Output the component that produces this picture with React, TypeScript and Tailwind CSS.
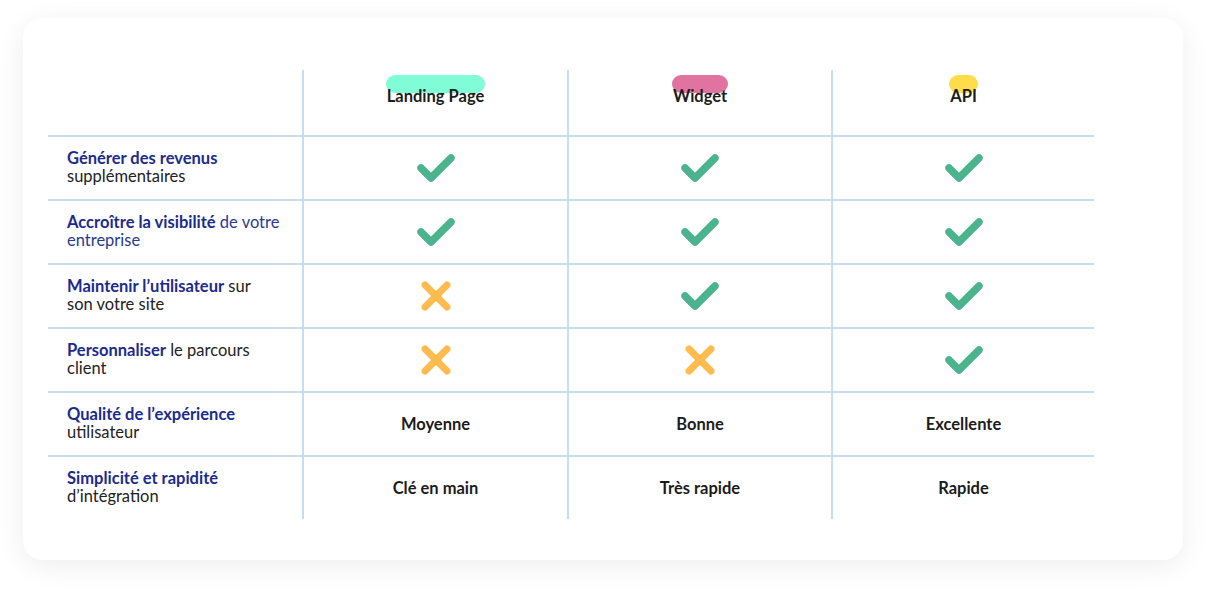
import React from 'react';

type Mark = 'yes' | 'no' | string;

const columns = [
  { label: 'Landing Page', pill: 'bg-[#80fcd6]' },
  { label: 'Widget', pill: 'bg-[#e0739f]' },
  { label: 'API', pill: 'bg-[#ffdc4a]' },
];

const rows: { title: React.ReactNode; values: Mark[] }[] = [
  {
    title: (
      <>
        <b className="font-bold text-[#1b2b8c]">Générer des revenus</b>
        <br />
        supplémentaires
      </>
    ),
    values: ['yes', 'yes', 'yes'],
  },
  {
    title: (
      <span className="text-[#2a3a90]">
        <b className="font-bold text-[#1b2b8c]">Accroître la visibilité</b> de votre
        <br />
        entreprise
      </span>
    ),
    values: ['yes', 'yes', 'yes'],
  },
  {
    title: (
      <>
        <b className="font-bold text-[#1b2b8c]">Maintenir l’utilisateur</b> sur
        <br />
        son votre site
      </>
    ),
    values: ['no', 'yes', 'yes'],
  },
  {
    title: (
      <>
        <b className="font-bold text-[#1b2b8c]">Personnaliser</b> le parcours
        <br />
        client
      </>
    ),
    values: ['no', 'no', 'yes'],
  },
  {
    title: (
      <>
        <b className="font-bold text-[#1b2b8c]">Qualité de l’expérience</b>
        <br />
        utilisateur
      </>
    ),
    values: ['Moyenne', 'Bonne', 'Excellente'],
  },
  {
    title: (
      <>
        <b className="font-bold text-[#1b2b8c]">Simplicité et rapidité</b>
        <br />
        d’intégration
      </>
    ),
    values: ['Clé en main', 'Très rapide', 'Rapide'],
  },
];

const Check = () => (
  <svg width="40" height="30" viewBox="0 0 40 30" fill="none">
    <path d="M5 15 L15 25 L35 5" stroke="#4bb48e" strokeWidth="7.5" strokeLinecap="round" strokeLinejoin="round" />
  </svg>
);

const Cross = () => (
  <svg width="30" height="30" viewBox="0 0 30 30" fill="none">
    <path d="M4 4 L26 26 M26 4 L4 26" stroke="#ffbb4d" strokeWidth="7" strokeLinecap="round" />
  </svg>
);

const Cell = ({ value }: { value: Mark }) => {
  if (value === 'yes') return <Check />;
  if (value === 'no') return <Cross />;
  return <span className="text-[16.5px] font-bold text-[#1c1c1c]">{value}</span>;
};

const App: React.FC = () => {
  return (
    <div className="min-h-[591px] w-[1211px] bg-white pl-[23px] pt-[18px] font-['Lato',sans-serif]">
      <div className="h-[542px] w-[1160px] rounded-[20px] bg-white pl-[25px] pt-[52px] shadow-[0_6px_28px_rgba(0,0,0,0.07)]">
        <div className="grid w-[1046px] grid-cols-[254px_265px_264px_263px]">
          {/* Header */}
          <div className="h-[65px]" />
          {columns.map((col) => (
            <div key={col.label} className="flex h-[65px] justify-center border-l-2 border-[#c6dcf3] pt-[14px]">
              <span className="relative h-fit">
                <span className={`absolute -left-[1px] -right-[1px] top-[-9px] h-[18px] rounded-full ${col.pill}`} />
                <span className="relative text-[16.5px] font-bold leading-[20px] text-[#1c1c1c]">{col.label}</span>
              </span>
            </div>
          ))}

          {/* Body */}
          {rows.map((row, i) => (
            <React.Fragment key={i}>
              <div className="flex h-[64px] items-center border-t-2 border-[#c6dcf3] pl-[19px] pb-[2px] text-[16.5px] leading-[18px] text-[#222]">
                <div>{row.title}</div>
              </div>
              {row.values.map((v, j) => (
                <div key={j} className="flex h-[64px] items-center justify-center border-l-2 border-t-2 border-[#c6dcf3]">
                  <Cell value={v} />
                </div>
              ))}
            </React.Fragment>
          ))}
        </div>
      </div>
    </div>
  );
};

export default App;
